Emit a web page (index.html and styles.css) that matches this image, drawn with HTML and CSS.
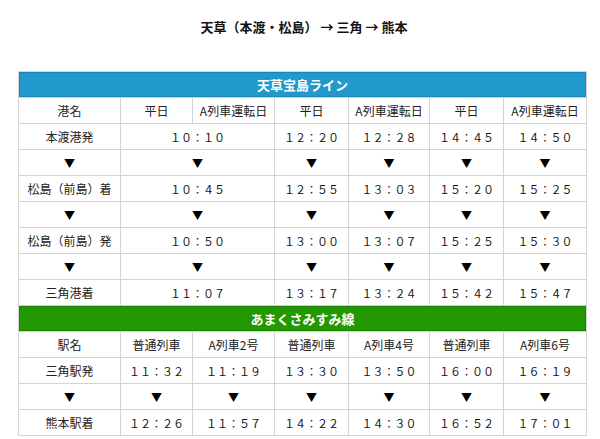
FILE: index.html
```html
<!DOCTYPE html>
<html lang="ja">
<head>
<meta charset="utf-8">
<link rel="stylesheet" href="styles.css">
</head>
<body>
<div class="wrap">
  <h1 class="title">天草（本渡・松島） → 三角 → 熊本</h1>
  <table class="tt">
    <colgroup>
      <col class="c1"><col class="c2"><col class="c3"><col class="c4"><col class="c5"><col class="c6"><col class="c7">
    </colgroup>
    <tr><th colspan="7" class="line blue">天草宝島ライン</th></tr>
    <tr><td>港名</td><td>平日</td><td>A列車運転日</td><td>平日</td><td>A列車運転日</td><td>平日</td><td>A列車運転日</td></tr>
    <tr><td>本渡港発</td><td colspan="2" class="t">１０：１０</td><td class="t">１２：２０</td><td class="t">１２：２８</td><td class="t">１４：４５</td><td class="t">１４：５０</td></tr>
    <tr><td class="a">▼</td><td colspan="2" class="a">▼</td><td class="a">▼</td><td class="a">▼</td><td class="a">▼</td><td class="a">▼</td></tr>
    <tr><td>松島（前島）着</td><td colspan="2" class="t">１０：４５</td><td class="t">１２：５５</td><td class="t">１３：０３</td><td class="t">１５：２０</td><td class="t">１５：２５</td></tr>
    <tr><td class="a">▼</td><td colspan="2" class="a">▼</td><td class="a">▼</td><td class="a">▼</td><td class="a">▼</td><td class="a">▼</td></tr>
    <tr><td>松島（前島）発</td><td colspan="2" class="t">１０：５０</td><td class="t">１３：００</td><td class="t">１３：０７</td><td class="t">１５：２５</td><td class="t">１５：３０</td></tr>
    <tr><td class="a">▼</td><td colspan="2" class="a">▼</td><td class="a">▼</td><td class="a">▼</td><td class="a">▼</td><td class="a">▼</td></tr>
    <tr><td>三角港着</td><td colspan="2" class="t">１１：０７</td><td class="t">１３：１７</td><td class="t">１３：２４</td><td class="t">１５：４２</td><td class="t">１５：４７</td></tr>
    <tr><th colspan="7" class="line green">あまくさみすみ線</th></tr>
    <tr><td>駅名</td><td>普通列車</td><td>A列車2号</td><td>普通列車</td><td>A列車4号</td><td>普通列車</td><td>A列車6号</td></tr>
    <tr><td>三角駅発</td><td class="t">１１：３２</td><td class="t">１１：１９</td><td class="t">１３：３０</td><td class="t">１３：５０</td><td class="t">１６：００</td><td class="t">１６：１９</td></tr>
    <tr><td class="a">▼</td><td class="a">▼</td><td class="a">▼</td><td class="a">▼</td><td class="a">▼</td><td class="a">▼</td><td class="a">▼</td></tr>
    <tr><td>熊本駅着</td><td class="t">１２：２６</td><td class="t">１１：５７</td><td class="t">１４：２２</td><td class="t">１４：３０</td><td class="t">１６：５２</td><td class="t">１７：０１</td></tr>
  </table>
</div>
</body>
</html>
```
FILE: styles.css
```css
html, body {
  margin: 0;
  padding: 0;
  background: #fff;
}
body {
  font-family: "Noto Sans CJK JP", "Noto Sans", sans-serif;
  color: #222;
}
.wrap {
  padding: 17px 14px 0 18px;
}
.title {
  margin: 0 0 34px;
  font-size: 13px;
  line-height: 20px;
  font-weight: bold;
  text-align: center;
  color: #111;
  padding-left: 4px;
}
.tt {
  width: 568px;
  border-collapse: collapse;
  table-layout: fixed;
  font-size: 12px;
}
.c1 { width: 102px; }
.c2 { width: 72px; }
.c3 { width: 82px; }
.c4 { width: 74px; }
.c5 { width: 81px; }
.c6 { width: 74px; }
.c7 { width: 83px; }
.tt td, .tt th {
  border: 1px solid #d4d4d4;
  height: 25px;
  padding: 0;
  text-align: center;
  vertical-align: middle;
  line-height: 16px;
  white-space: nowrap;
}
.tt th.line {
  color: #fff;
  font-size: 13px;
  font-weight: bold;
}
.tt th.blue {
  background: #2299cc;
  box-shadow: inset 0 0 0 1px #1787b8;
}
.tt th.green {
  background: #229900;
  box-shadow: inset 0 0 0 1px #1a8400;
}
.tt td.t {
  font-size: 11px;
  color: #111;
}
.tt td.a {
  font-size: 11px;
  color: #000;
}
```
